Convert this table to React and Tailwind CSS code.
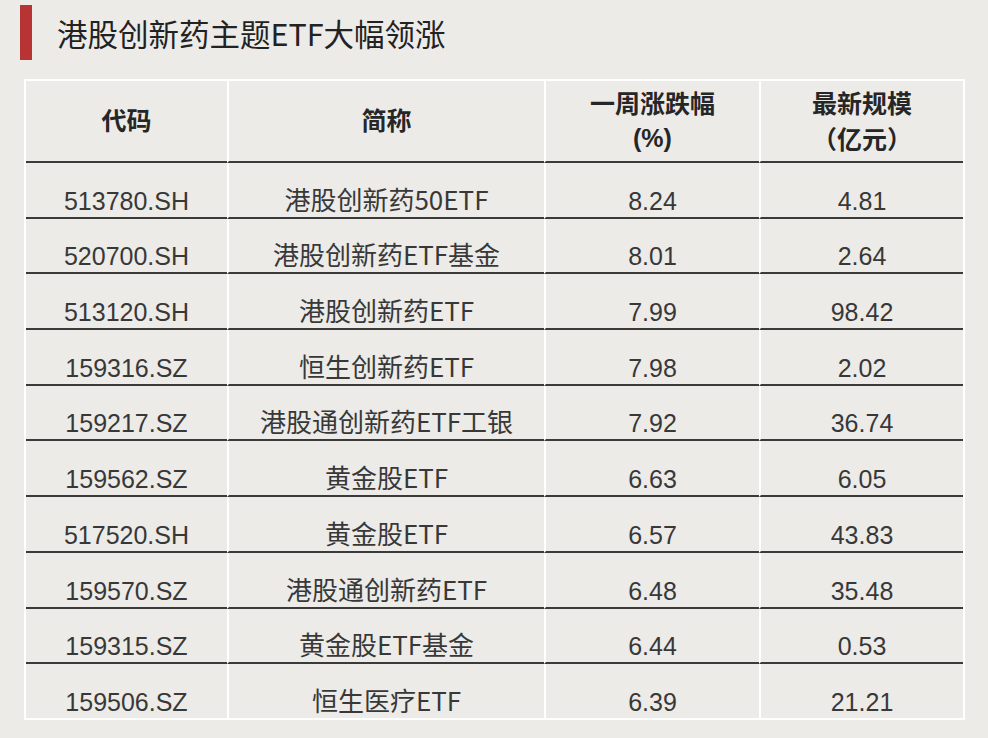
import React from "react";

const rows = [
  ["513780.SH", "港股创新药50ETF", "8.24", "4.81"],
  ["520700.SH", "港股创新药ETF基金", "8.01", "2.64"],
  ["513120.SH", "港股创新药ETF", "7.99", "98.42"],
  ["159316.SZ", "恒生创新药ETF", "7.98", "2.02"],
  ["159217.SZ", "港股通创新药ETF工银", "7.92", "36.74"],
  ["159562.SZ", "黄金股ETF", "6.63", "6.05"],
  ["517520.SH", "黄金股ETF", "6.57", "43.83"],
  ["159570.SZ", "港股通创新药ETF", "6.48", "35.48"],
  ["159315.SZ", "黄金股ETF基金", "6.44", "0.53"],
  ["159506.SZ", "恒生医疗ETF", "6.39", "21.21"],
];

const font = { fontFamily: '"Liberation Sans", "Noto Sans CJK SC", sans-serif' };
const cjk = { fontFamily: '"Noto Sans CJK SC", sans-serif' };

const App = () => {
  return (
    <div
      className="w-[988px] h-[738px] bg-[#ecebe8] text-[#383838] overflow-hidden"
      style={font}
    >
      {/* Title */}
      <div className="flex items-center pt-[5px] pl-[20px]">
        <div className="w-[12px] h-[55px] bg-[#b83333]" />
        <h1
          className="ml-[25px] text-[30.5px] leading-[40px] text-[#222] font-normal"
          style={cjk}
        >
          港股创新药主题ETF大幅领涨
        </h1>
      </div>

      {/* Table */}
      <div className="ml-[24px] mt-[19px] w-[941px] border-2 border-white">
        <div className="grid grid-cols-[201px_317px_215px_204px] h-[82px] text-[25px] font-bold leading-[34px] text-[#262626]">
          <div className="flex items-center justify-center border-b-2 border-[#3a3a3a]">代码</div>
          <div className="flex items-center justify-center border-b-2 border-l-2 border-b-[#3a3a3a] border-l-white">简称</div>
          <div className="flex flex-col items-center justify-center border-b-2 border-l-2 border-b-[#3a3a3a] border-l-white">
            <span>一周涨跌幅</span>
            <span>(%)</span>
          </div>
          <div className="flex flex-col items-center justify-center border-b-2 border-l-2 border-b-[#3a3a3a] border-l-white">
            <span>最新规模</span>
            <span style={cjk}>（亿元）</span>
          </div>
        </div>
        {rows.map((r, i) => {
          const last = i === rows.length - 1;
          const bb = last ? "" : "border-b-2 border-b-[#3a3a3a]";
          return (
            <div
              key={r[0]}
              className={`grid grid-cols-[201px_317px_215px_204px] text-[25px] leading-[28px] ${last ? "h-[53.7px]" : "h-[55.7px]"}`}
            >
              {r.map((c, j) => (
                <div
                  key={j}
                  className={`flex items-end justify-center ${bb} ${j > 0 ? "border-l-2 border-l-white" : ""} ${j === 1 ? "text-[26px] pb-[4px]" : "pb-[2px]"}`}
                  style={j === 1 ? cjk : undefined}
                >
                  {c}
                </div>
              ))}
            </div>
          );
        })}
      </div>
    </div>
  );
};

export default App;
